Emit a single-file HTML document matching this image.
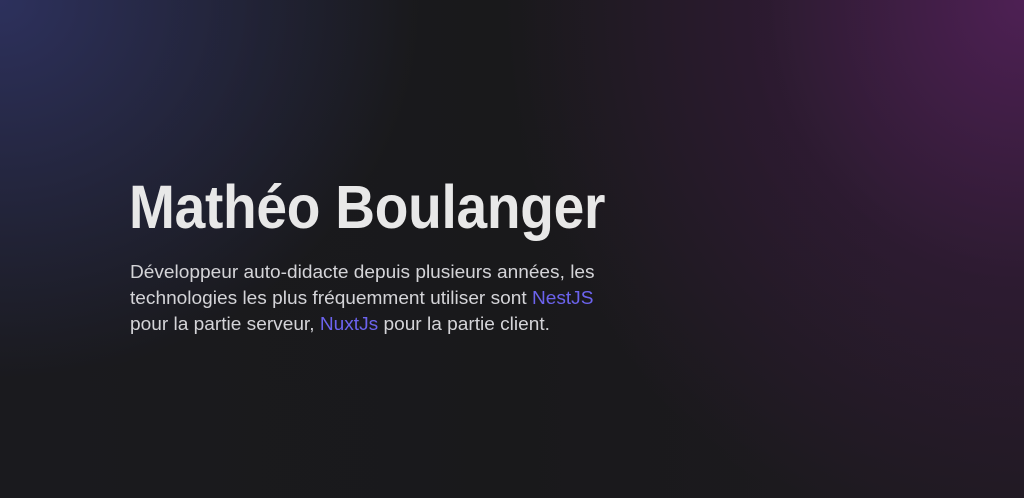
<!DOCTYPE html>
<html><head><meta charset="utf-8"><style>
html,body{margin:0;padding:0;width:1024px;height:498px;overflow:hidden;}
body{background:
radial-gradient(ellipse 420px 380px at 0px 0px, rgba(46,50,96,0.95), rgba(46,50,96,0) 100%),
radial-gradient(ellipse 520px 560px at 1024px 0px, rgba(78,32,84,1), rgba(60,28,66,0.5) 50%, rgba(40,24,40,0) 100%),
linear-gradient(90deg,#1a1a1e 0%,#19191b 50%,#1e1a20 100%);
font-family:"Liberation Sans",sans-serif;position:relative;}
h1{position:absolute;left:129px;top:169px;margin:0;font-size:61px;font-weight:bold;color:#e8e8e8;white-space:nowrap;transform-origin:0 0;transform:scaleX(0.903);line-height:76px;letter-spacing:-0.3px}
.p{position:absolute;left:130px;top:259px;color:#d4d4d8;font-size:18px;line-height:26px;white-space:nowrap;}
.p div{transform-origin:0 0;transform:scaleX(1.06)}
a{color:#6c63ee;text-decoration:none}
</style></head><body>
<h1>Mathéo Boulanger</h1>
<div class="p">
<div>Développeur auto-didacte depuis plusieurs années, les</div>
<div>technologies les plus fréquemment utiliser sont <a>NestJS</a></div>
<div>pour la partie serveur, <a>NuxtJs</a> pour la partie client.</div>
</div>
</body></html>
